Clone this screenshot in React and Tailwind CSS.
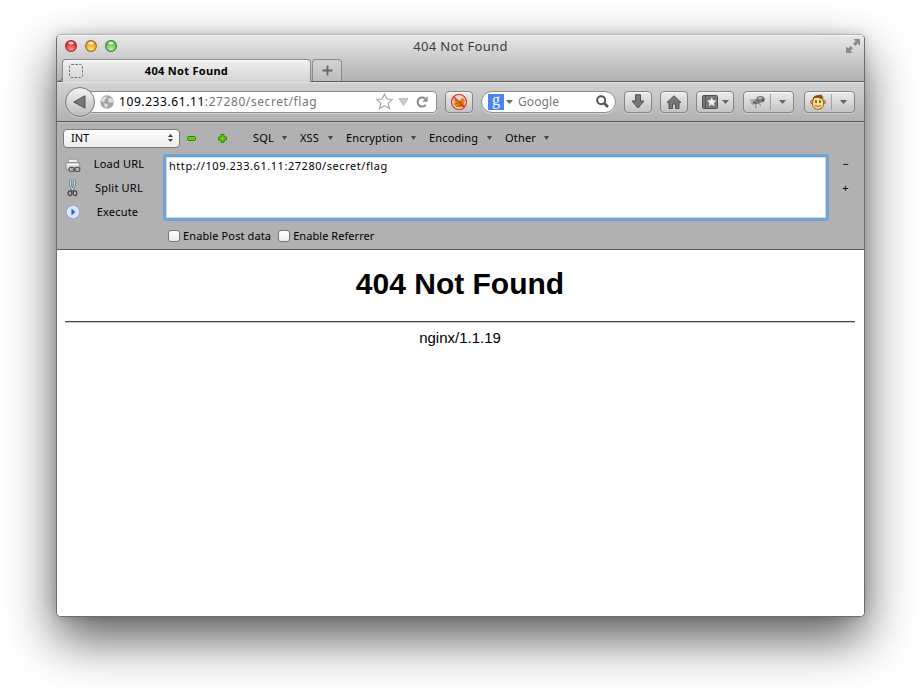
import React from "react";

const ui = "font-['Noto_Sans','Open_Sans',sans-serif]";
const btn =
  "flex h-[22px] shrink-0 items-center rounded-[4px] border border-[#858585] bg-gradient-to-b from-[#ececec] to-[#c4c4c4] shadow-[inset_0_1px_0_#f6f6f6,0_1px_0_#cfcfcf]";

function Caret({ w = 7, h = 4, fill = "#666" }) {
  return (
    <svg width={w} height={h} viewBox="0 0 8 5" preserveAspectRatio="none" className="block shrink-0">
      <path d="M0 0H8L4 5Z" fill={fill} />
    </svg>
  );
}

function Light({ from, to, ring }) {
  const id = "light" + ring.slice(1);
  return (
    <svg width="12" height="12" viewBox="0 0 12 12" className="block">
      <defs>
        <radialGradient id={id} cx="50%" cy="85%" r="75%">
          <stop offset="0" stopColor={from} />
          <stop offset="1" stopColor={to} />
        </radialGradient>
      </defs>
      <circle cx="6" cy="6" r="5.4" fill={`url(#${id})`} stroke={ring} strokeWidth="1.1" />
      <ellipse cx="6" cy="3.1" rx="2.8" ry="1.5" fill="#fff" opacity=".75" />
    </svg>
  );
}

function TitleBar() {
  return (
    <div className="flex h-[22px] items-center pl-2 pr-1">
      <div className="flex w-[100px] gap-2">
        <Light from="#ff9d98" to="#d8151f" ring="#a3292c" />
        <Light from="#ffe879" to="#ee8d10" ring="#a46a1f" />
        <Light from="#c4f5a5" to="#4cae3f" ring="#3e8037" />
      </div>
      <div className={`${ui} flex-1 pr-[4px] text-center text-[13px] leading-4 tracking-[0.34px] text-[#3c3c3c]`}>404 Not Found</div>
      <div className="flex w-[100px] justify-end">
        <svg width="14" height="14" viewBox="0 0 14 14" fill="#8a8a8a" className="block">
          <path d="M7.3 0H14V6.7L11.7 4.4L9.2 6.9L7.1 4.8L9.6 2.3Z" />
          <path d="M6.7 14H0V7.3L2.3 9.6L4.8 7.1L6.9 9.2L4.4 11.7Z" />
        </svg>
      </div>
    </div>
  );
}

function TabStrip() {
  return (
    <div className="mt-[2px] flex h-[23px] items-end border-b border-[#5f5f5f]">
      <svg width="6" height="23" viewBox="0 0 6 23" className="-mb-px block shrink-0">
        <path d="M0 22.5C4 22.5 5.5 20 5.5 17V4" fill="none" stroke="#666" />
      </svg>
      <div className="-ml-px -mb-px flex h-[23px] w-[249px] items-center rounded-t-[4px] border border-b-0 border-[#8a8a8a] bg-gradient-to-b from-[#f1f1f1] to-[#d3d3d3] pl-[6px] shadow-[inset_0_1px_0_#fafafa]">
        <svg width="14" height="14" viewBox="0 0 14 14" className="block">
          <rect x=".5" y=".5" width="13" height="13" rx="2" fill="none" stroke="#6d6d6d" strokeDasharray="2.4 1.5" />
        </svg>
        <div className={`${ui} flex-1 pr-[20px] text-center text-[11px] leading-4 font-bold tracking-[0.3px] text-black`}>404 Not Found</div>
      </div>
      <div className="ml-px flex h-[22px] w-[30px] items-center justify-center rounded-t-[4px] border border-b-0 border-[#8a8a8a] bg-gradient-to-b from-[#d4d4d4] to-[#bdbdbd]">
        <svg width="11" height="11" viewBox="0 0 11 11" className="block">
          <path d="M5.5 .5V10.5M.5 5.5H10.5" stroke="#666" strokeWidth="1.8" />
        </svg>
      </div>
    </div>
  );
}

function NavBar() {
  return (
    <div className="flex h-[40px] items-center border-b border-[#555] bg-gradient-to-b from-[#d3d3d3] to-[#b2b2b2] pl-2 pr-[9px] shadow-[inset_0_1px_0_#e2e2e2]">
      <div className="z-10 flex size-[30px] shrink-0 items-center justify-center rounded-full border border-[#777] bg-gradient-to-b from-[#f2f2f2] to-[#bdbdbd] shadow-[0_1px_0_#d5d5d5]">
        <svg width="13" height="14" viewBox="0 0 13 14" className="mr-[2px] block">
          <path d="M.8 7L12 .8V13.2Z" fill="#777" stroke="#505050" />
        </svg>
      </div>
      <div className="-ml-[6px] flex h-[22px] w-[348px] items-center rounded-r-[4px] border border-[#8d8d8d] bg-white pl-[10px] pr-2 shadow-[0_1px_0_#d5d5d5]">
        <svg width="14" height="14" viewBox="0 0 14 14" className="block shrink-0">
          <circle cx="7" cy="7" r="6.7" fill="#a3a3a3" />
          <path d="M2 3.2C3.5 1.6 5.6 1.2 7.2 1.6L6.4 3.4L4.7 4.4L5 6L3 7.2L1.2 6.2C1.2 5 1.4 4 2 3.2ZM8.7 3L11.4 2.9C12.8 4.3 13.2 6 12.7 8L11 7.2L9.6 8L8 6.4ZM4.2 8.2L7 8.9L8.1 10.6L6 12.8C4.8 12.3 4.6 10.8 4 9.8Z" fill="#dedede" />
        </svg>
        <div className={`${ui} flex-1 pt-px pl-[5px] text-[12px] leading-4 tracking-[0.58px] whitespace-nowrap text-[#777]`}>
          <span className="text-black">109.233.61.11</span>:27280/secret/flag
        </div>
        <svg width="17" height="17" viewBox="0 0 17 17" className="block">
          <path d="M8.5 1L10.8 6L16.2 6.5L12.1 10.1L13.4 15.5L8.5 12.6L3.6 15.5L4.9 10.1L.8 6.5L6.2 6Z" fill="#fff" stroke="#a8a8a8" strokeWidth="1.2" />
        </svg>
        <svg width="11" height="8" viewBox="0 0 11 8" className="mr-[7px] ml-[5px] block">
          <path d="M1 .7H10L5.5 7.2Z" fill="#ccc" stroke="#b5b5b5" />
        </svg>
        <svg width="12" height="12" viewBox="0 0 12 12" className="block">
          <path d="M9.7 8.8A4.5 4.5 0 1 1 9 2.6" fill="none" stroke="#8b8b8b" strokeWidth="2" />
          <path d="M11.6 .2V5.7H6.1Z" fill="#8b8b8b" />
        </svg>
      </div>
      <div className={`${btn} ml-2 w-[28px] justify-center`}>
        <svg width="18" height="18" viewBox="0 0 18 18" className="block">
          <circle cx="9" cy="9" r="7.5" fill="#ecd8d2" />
          <path d="M3 6L6.5 6.5L9 8L12.5 4.5L15 7L14 10L15 13L11 14.5L6 14L3.5 11L5 9Z" fill="#df8613" />
          <path d="M6 10L8 11M10 8L12 9.5M8 13L12 12" stroke="#9d5a0c" />
          <circle cx="9" cy="9" r="7.5" fill="none" stroke="#d62d26" strokeWidth="1.2" />
          <path d="M3.7 3.7L14.3 14.3" stroke="#d62d26" strokeWidth="1.3" />
        </svg>
      </div>
      <div className="ml-2 flex h-[22px] w-[135px] items-center rounded-full border border-[#8d8d8d] bg-white pl-[6px] pr-[6px] shadow-[0_1px_0_#d5d5d5]">
        <div className="flex size-4 items-center justify-center bg-[#4a86ee] pb-[3px] font-['Liberation_Serif',serif] text-[16px] leading-4 text-white">g</div>
        <div className="ml-[2px]"><Caret w={7} h={4} /></div>
        <div className={`${ui} flex-1 pt-px pl-[5px] text-[12px] leading-4 tracking-[0.1px] text-[#777]`}>Google</div>
        <svg width="13" height="13" viewBox="0 0 13 13" className="block">
          <circle cx="5.2" cy="5.2" r="4" fill="none" stroke="#555" strokeWidth="2" />
          <path d="M8 8L12 12" stroke="#555" strokeWidth="2.6" />
        </svg>
      </div>
      <div className={`${btn} ml-2 w-[28px] justify-center`}>
        <svg width="14" height="15" viewBox="0 0 14 15" className="block">
          <path d="M4.5 .8H9.5V7H13L7 14L1 7H4.5Z" fill="#777" stroke="#505050" />
        </svg>
      </div>
      <div className={`${btn} ml-2 w-[28px] justify-center`}>
        <svg width="16" height="14" viewBox="0 0 16 14" className="block">
          <path d="M8 .8L15 7.5H13V13.5H9.5V9H6.5V13.5H3V7.5H1Z" fill="#777" stroke="#505050" />
        </svg>
      </div>
      <div className={`${btn} ml-2 w-[38px] gap-1 pl-[5px]`}>
        <svg width="16" height="14" viewBox="0 0 16 14" className="block">
          <rect x=".5" y=".5" width="15" height="13" rx="1" fill="#777" stroke="#505050" />
          <path d="M3.5 1V13" stroke="#555" />
          <path d="M9.7 2.2L11 5.3L14.4 5.6L11.9 7.9L12.6 11.3L9.7 9.6L6.8 11.3L7.5 7.9L5 5.6L8.4 5.3Z" fill="#f3f3f3" />
        </svg>
        <Caret />
      </div>
      <div className={`${btn} ml-[9px] w-[51px] pl-[5px]`}>
        <svg width="17" height="14" viewBox="0 0 17 14" className="block">
          <path d="M2 8L5 8.5L3.5 10.5M7 9L6.5 12.5L8 13M10.5 8L11.5 11" stroke="#8a8a8a" fill="none" />
          <ellipse cx="4.5" cy="6" rx="4" ry="1.9" fill="#b2b2b2" transform="rotate(10 4.5 6)" />
          <ellipse cx="8" cy="6.5" rx="4" ry="2.7" fill="#8c8c8c" transform="rotate(-15 8 6.5)" />
          <ellipse cx="11.5" cy="4.3" rx="4.2" ry="3.3" fill="#7d7d7d" />
          <ellipse cx="11" cy="3.2" rx="2" ry="1.1" fill="#b9b9b9" />
          <circle cx="14" cy="5" r="1.5" fill="#5a5a5a" />
          <path d="M4 7.5L8 8M8 4.5L10 7" stroke="#505050" />
        </svg>
        <div className="ml-[4px] h-[16px] w-px bg-[#a2a2a2]" />
        <div className="ml-[8px]"><Caret /></div>
      </div>
      <div className={`${btn} ml-[10px] w-[51px] pl-[5px]`}>
        <svg width="17" height="16" viewBox="0 0 17 16" className="block">
          <circle cx="2.3" cy="8" r="1.7" fill="#f3bd6c" stroke="#8b4f18" strokeWidth=".8" />
          <circle cx="13.7" cy="8" r="1.7" fill="#f3bd6c" stroke="#8b4f18" strokeWidth=".8" />
          <path d="M3 6.5C3 3.5 5 2.5 8 2.5S13 3.5 13 6.5C14.8 11.5 12.6 15.2 8 15.2S1.2 11.5 3 6.5Z" fill="#ffdc8c" stroke="#8b4f18" strokeWidth=".9" />
          <path d="M2.6 5.5C2.8 2.4 5 1 9 .9L12.5 .4L11.5 1.8L14 3.2L12 3.8L13 5.4L8 3.8L5 4Z" fill="#8a4b1b" />
          <path d="M6 6.3V9M10 6.3V9" stroke="#1c5a2a" strokeWidth="1.5" />
          <path d="M4.6 11.6Q8 13.2 11.4 11.6" fill="none" stroke="#8b4f18" strokeWidth=".9" />
        </svg>
        <div className="ml-[4px] h-[16px] w-px bg-[#a2a2a2]" />
        <div className="ml-[8px]"><Caret /></div>
      </div>
    </div>
  );
}

function Menu({ label, className }) {
  return (
    <div className={`flex items-center justify-between ${className}`}>
      <span>{label}</span>
      <Caret w={5} h={4} fill="#444" />
    </div>
  );
}

function Check({ label, track }) {
  return (
    <div className="flex items-center">
      <div className="mr-[3px] size-3 rounded-[3px] border border-[#777] bg-gradient-to-b from-white to-[#ececec]" />
      <span className={track}>{label}</span>
    </div>
  );
}

function HackBar() {
  return (
    <div className={`${ui} flex h-[128px] flex-col border-b border-[#5b5b5b] bg-[#b1b1b1] text-[11px] leading-4 text-black shadow-[inset_0_1px_0_#c4c4c4]`}>
      <div className="flex h-8 shrink-0 items-center pl-[6px]">
        <div className="flex h-[19px] w-[117px] items-center justify-between rounded-[4px] border border-[#7b7b7b] bg-gradient-to-b from-white to-[#ececec] pl-[7px] pr-[6px]">
          <span>INT</span>
          <svg width="5" height="8" viewBox="0 0 5 8" className="block">
            <path d="M0 3L2.5 0L5 3ZM0 5L2.5 8L5 5Z" fill="#444" />
          </svg>
        </div>
        <svg width="9" height="5" viewBox="0 0 9 5" className="mt-px ml-[7px] block">
          <rect x=".5" y=".5" width="8" height="4" rx="1.2" fill="#64d20b" stroke="#34800b" />
        </svg>
        <svg width="9" height="9" viewBox="0 0 9 9" className="mt-px ml-[22px] block">
          <path d="M3 .6H6V3H8.4V6H6V8.4H3V6H.6V3H3Z" fill="#64d20b" stroke="#34800b" strokeLinejoin="round" />
        </svg>
        <Menu label="SQL" className="ml-[26px] w-[34px] tracking-[0.15px]" />
        <Menu label="XSS" className="ml-[13px] w-[33px] tracking-[0.15px]" />
        <Menu label="Encryption" className="ml-[13px] w-[70px] tracking-[0.15px]" />
        <Menu label="Encoding" className="ml-[13px] w-[63px] tracking-[0.15px]" />
        <Menu label="Other" className="ml-[13px] w-[44px] tracking-[0.2px]" />
      </div>
      <div className="flex h-[67px] shrink-0">
        <div className="-mt-[2px] flex w-[106px] flex-col">
          <div className="flex h-6 shrink-0 items-center pl-2">
            <svg width="17" height="15" viewBox="0 0 17 15" className="mt-[2px] block">
              <path d="M2.5 5L4 1.2H11.5L13.5 5Z" fill="#f2f2f2" stroke="#999" />
              <rect x=".8" y="4.5" width="14" height="7.5" rx="2" fill="#d9d9d9" stroke="#8a8a8a" />
              <path d="M2.5 6.6H13" stroke="#fff" />
              <rect x="4" y="9.3" width="5.4" height="4.2" rx="2" fill="#bbb" stroke="#555" strokeWidth="1.2" />
              <rect x="9.4" y="9.3" width="5.4" height="4.2" rx="2" fill="#bbb" stroke="#555" strokeWidth="1.2" />
              <path d="M7.5 11.4H11.5" stroke="#555" />
            </svg>
            <span className="flex-1 pr-[7px] text-center tracking-[0.2px]">Load URL</span>
          </div>
          <div className="flex h-6 shrink-0 items-center pl-2">
            <svg width="17" height="18" viewBox="0 0 17 18" className="block">
              <path d="M5.4 .8V6.5L8.6 12M9.6 .8V6.5L6.4 12" fill="none" stroke="#496d80" strokeWidth="2.2" />
              <path d="M5.4 1.2V6.5L8 11M9.6 1.2V6.5L7 11" fill="none" stroke="#c9e9f6" strokeWidth="1" />
              <ellipse cx="5" cy="14.2" rx="1.9" ry="2.4" fill="none" stroke="#484848" strokeWidth="1.3" />
              <ellipse cx="10" cy="14.2" rx="1.9" ry="2.4" fill="none" stroke="#484848" strokeWidth="1.3" />
            </svg>
            <span className="flex-1 pr-[7px] text-center tracking-[0.2px]">Split URL</span>
          </div>
          <div className="flex h-6 shrink-0 items-center pl-2">
            <svg width="16" height="16" viewBox="0 0 16 16" className="block">
              <circle cx="8" cy="8" r="6.7" fill="#edf4fc" stroke="#9caec9" strokeWidth="1.3" />
              <circle cx="8" cy="8" r="5" fill="#d3e4f8" />
              <path d="M6.5 4.6L10.2 8L6.5 11.4Z" fill="#2265c4" />
            </svg>
            <span className="flex-1 pr-[9px] text-center tracking-[0.2px]">Execute</span>
          </div>
        </div>
        <div className="h-[67px] w-[666px] rounded-[3px] border-[3px] border-[#72a2d4] bg-white pt-[1px] pl-[3px] tracking-[0.55px] shadow-[inset_0_0_1px_1px_#c6daf0,0_0_1px_#8fb2d8]">
          http://109.233.61.11:27280/secret/flag
        </div>
        <div className="flex w-[33px] flex-col items-center text-[11px]">
          <div className="mt-[2px] h-6">−</div>
          <div>+</div>
        </div>
      </div>
      <div className="flex h-[28px] items-center gap-[7px] pt-px pl-[111px]">
        <Check label="Enable Post data" track="tracking-[0.12px]" />
        <Check label="Enable Referrer" track="tracking-[0.06px]" />
      </div>
    </div>
  );
}

export default function App() {
  return (
    <div className="h-[695px] w-[921px] overflow-hidden bg-white pt-[34px] pl-[56px]">
      <div className="flex h-[583px] w-[809px] flex-col overflow-hidden rounded-[5px] border border-[#6d6d6d] border-t-[#b5b5b5] bg-white shadow-[0_22px_50px_rgba(0,0,0,0.64),0_0_12px_rgba(0,0,0,0.16)]">
        <div className="h-[47px] shrink-0 bg-gradient-to-b from-[#e8e8e8] to-[#b0b0b0] shadow-[inset_0_1px_0_#f4f4f4]">
          <TitleBar />
          <TabStrip />
        </div>
        <div className="shrink-0"><NavBar /></div>
        <div className="shrink-0"><HackBar /></div>
        <div className="flex-1 bg-white pr-[9px] pl-2 text-center font-['Liberation_Sans',Arial,sans-serif] text-black">
          <h1 className="pt-[16px] text-[30px] leading-9 font-bold">404 Not Found</h1>
          <div className="mt-[19px] h-[2px] border-t border-[#444] bg-[#ccc]" />
          <div className="mt-[6px] text-[15px] leading-[18px]">nginx/1.1.19</div>
        </div>
      </div>
    </div>
  );
}
